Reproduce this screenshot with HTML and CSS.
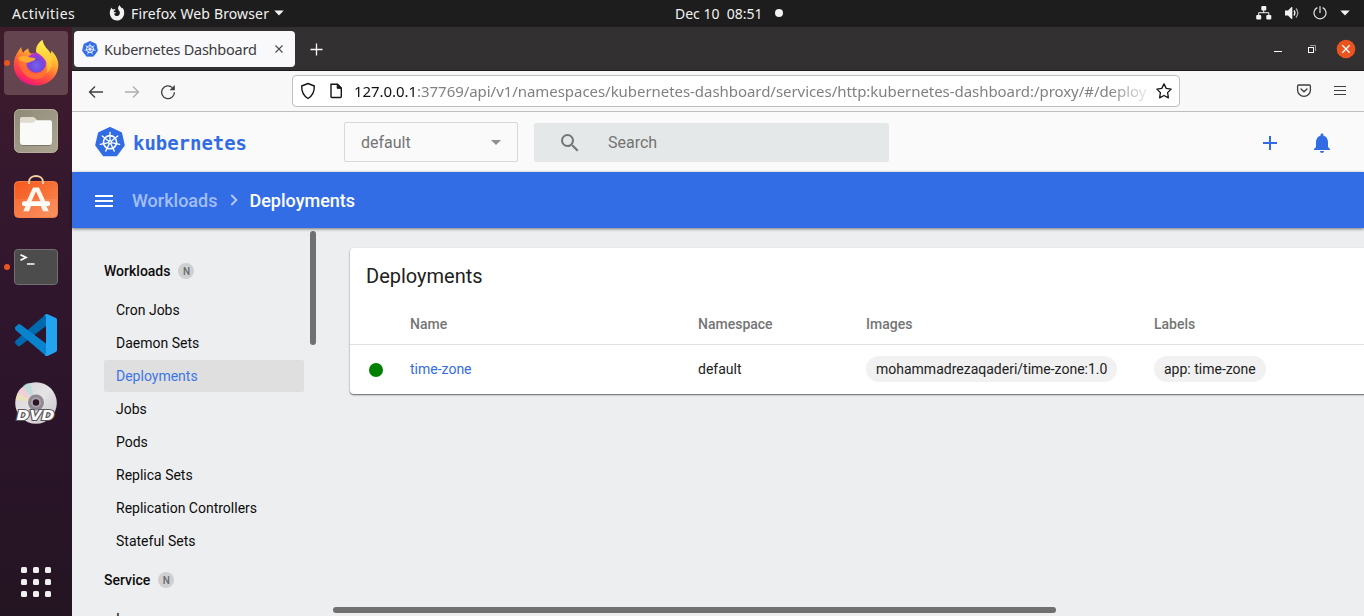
FILE: index.html
```html
<!DOCTYPE html>
<html lang="en">
<head>
<meta charset="utf-8">
<title>Kubernetes Dashboard</title>
<link rel="stylesheet" href="styles.css">
</head>
<body>
<svg width="0" height="0" class="defs">
  <symbol id="k8s" viewBox="0 0 30 30">
    <path d="M15 .8 26.2 6 29 18.2 21.4 28.4H8.6L1 18.2 3.8 6Z" fill="#326ce5" stroke="#326ce5" stroke-width="1.6" stroke-linejoin="round"/>
    <g fill="none" stroke="#fff" stroke-width="1.3" stroke-linecap="round">
      <circle cx="15" cy="15.2" r="6.6" stroke-width="1.6"/>
      <path id="sp" d="M15 13.7V5.3"/>
      <use href="#sp" transform="rotate(51.43 15 15.2)"/>
      <use href="#sp" transform="rotate(102.86 15 15.2)"/>
      <use href="#sp" transform="rotate(154.29 15 15.2)"/>
      <use href="#sp" transform="rotate(205.71 15 15.2)"/>
      <use href="#sp" transform="rotate(257.14 15 15.2)"/>
      <use href="#sp" transform="rotate(308.57 15 15.2)"/>
    </g>
    <circle cx="15" cy="15.2" r="2" fill="#fff"/><circle cx="15" cy="15.2" r=".7" fill="#326ce5"/>
  </symbol>
</svg>
<div class="desktop">
  <header class="topbar">
    <span class="activities ubuntu">Activities</span>
    <div class="appmenu">
      <svg width="16" height="16" viewBox="0 0 16 16"><path d="M.8 8.3C.8 5.8 1.6 4 2.5 2.6 2.8 3.8 3.3 4.4 4.2 4.4 5 4.2 6 4.3 6.6 4.8 5.8 5.3 4.9 5.8 4.7 6.6 4.8 7.5 6 7.4 7 7.3 6.8 8.4 5.4 8.3 5.2 9 5.7 11 7.4 11.4 8.8 10.9 10.6 10.2 11.2 8.4 10.7 6.7 10.3 5.6 9.2 5 9.1 3.5 9 2 9.8.8 10.8.2 11.1 1.8 12.3 2.4 13 3.5L13.5 2.7C14.8 4.3 15.3 6.2 15.2 8.2 15 12.3 12 15.5 8 15.5 4 15.5 1 12.4.8 8.3Z" fill="#f2f2f2"/></svg>
      <span class="app-name ubuntu">Firefox Web Browser</span>
      <svg width="10" height="6" viewBox="0 0 10 6"><path d="M.3.5H9.7L5 5.5Z" fill="#f2f2f2"/></svg>
    </div>
    <div class="clock"><span class="ubuntu date">Dec 10&nbsp; 08:51</span><i></i></div>
    <div class="tray">
      <svg width="16" height="14" viewBox="0 0 16 14"><g fill="#f2f2f2"><rect x="5.3" y="0" width="5" height="4.4" rx="1"/><rect x=".2" y="9" width="5" height="4.5" rx="1"/><rect x="10.3" y="9" width="5" height="4.5" rx="1"/></g><path d="M7.7 4V6.7M2.7 9.5V6.7H12.8V9.5" fill="none" stroke="#f2f2f2"/></svg>
      <svg width="15" height="14" viewBox="0 0 15 14"><path d="M0 4.5H3L6.5 1H7.3V13H6.5L3 9.5H0Z" fill="#f2f2f2"/><path d="M9 4.5Q10.8 7 9 9.5" fill="none" stroke="#f2f2f2" stroke-width="1.3"/><path d="M11 2.5Q14.6 7 11 11.5" fill="none" stroke="#aaa" stroke-width="1.3"/></svg>
      <svg width="14" height="14" viewBox="0 0 14 14"><path d="M4.3 1.6A6 6 0 1 0 9.7 1.6M7 .2V7" fill="none" stroke="#e4e4e4" stroke-width="1.2"/></svg>
      <svg width="10" height="6" viewBox="0 0 10 6"><path d="M.3.5H9.7L5 5.5Z" fill="#f2f2f2"/></svg>
    </div>
  </header>
  <nav class="dock">
    <div class="dock-item active running">
      <svg width="48" height="50" viewBox="0 0 48 50">
        <defs>
          <linearGradient id="ff1" x1=".8" y1=".05" x2=".3" y2="1"><stop offset="0" stop-color="#fff44f"/><stop offset=".35" stop-color="#ffb030"/><stop offset=".62" stop-color="#ff6037"/><stop offset=".85" stop-color="#ff2f56"/><stop offset="1" stop-color="#e31587"/></linearGradient>
          <radialGradient id="ff2" cx=".5" cy=".65" r=".6"><stop offset="0" stop-color="#7463ef"/><stop offset=".55" stop-color="#7148dc"/><stop offset="1" stop-color="#b833c9"/></radialGradient>
          <linearGradient id="ff3" x1="0" y1="0" x2="0" y2="1"><stop offset="0" stop-color="#fff34e"/><stop offset="1" stop-color="#ffae2c"/></linearGradient>
        </defs>
        <path d="M1.8 27C1.8 20 4.5 15.5 9.2 9 9.6 12 10 13.4 11.3 14.7 12.4 13 14.2 11.5 16.5 10.6 16.3 13 17 14.5 18.7 15.5L25 15C22.5 10 25.7 5.4 30.3 2 31.2 6.3 33.2 9.5 37 13L38.4 17 39.5 12.7C44 17 46.7 22.5 46.3 28 45.5 39.8 36 47.4 24.3 47.4 11.5 47.4 1.8 39 1.8 27Z" fill="url(#ff1)"/>
        <circle cx="24.3" cy="24.8" r="10" fill="url(#ff2)"/>
        <path d="M24 14C25 8 27 5 30.3 2 31.5 7.2 34 9.8 37 13.2 40.5 17 41 22 40 27 38.4 32.7 35.8 34.5 34 35.2 37 27 35 20.6 24 14Z" fill="url(#ff3)"/>
        <path d="M6 20C8 17 11 17.5 15 20 13 24 13.5 31 18 33.5 23 37 31 36 34.5 30 36.5 37.5 29 42 21 41 11 38.5 7.5 30 6 20Z" fill="#ff7b32" opacity=".7"/>
        <path d="M6 20C10 17.2 13 18 16.5 19 19 19.7 21.5 19.6 23.6 20.4 22 23.4 19 22.8 16.2 24.8 13 24.5 8 23.5 6 20Z" fill="#ffac2d"/>
      </svg>
    </div>
    <div class="dock-item">
      <svg width="46" height="46" viewBox="0 0 46 46"><defs><linearGradient id="fg" x2="1" y2="1"><stop stop-color="#8f8a78"/><stop offset="1" stop-color="#aba692"/></linearGradient></defs><rect x="1.5" y="1.5" width="43" height="43" rx="5" fill="url(#fg)" stroke="#b5b09d"/><path d="M7 15V11Q7 9 9 9H20Q21 9 22 10L24 12V16Z" fill="#dfdccf"/><path d="M7 14.8H20L23 12.2H37Q39 12.2 39 14.5V33.5Q39 37 36 37H10Q7 37 7 34Z" fill="#fafaf9"/><path d="M9 37.5H37" stroke="#7b7665"/></svg>
    </div>
    <div class="dock-item">
      <svg class="store" width="46" height="46" viewBox="0 0 46 46"><defs><linearGradient id="sg" x2="1" y2="1"><stop stop-color="#f4581d"/><stop offset="1" stop-color="#f98b55"/></linearGradient></defs><rect x="1.5" y="8.5" width="43" height="36" rx="4" fill="url(#sg)" stroke="#f77b45"/><path d="M2 26H44V41Q44 44 41 44H5Q2 44 2 41Z" fill="#fff" opacity=".08"/><path d="M16 11V9C16 1 30 1 30 9V11" fill="none" stroke="#f5d2a0" stroke-width="2"/><path d="M20 14.5H26L32.5 28.5H27.6L23 18.5 18.4 28.5H13.5Z" fill="#fff5ef"/><rect x="9" y="28.3" width="28" height="4.6" rx="2" fill="#fff"/><path d="M12.5 33H18L16 38.2H10.3ZM28 33H33.5L35.7 38.2H30Z" fill="#fff5ef"/></svg>
    </div>
    <div class="dock-item running">
      <svg width="46" height="46" viewBox="0 0 46 46"><rect x="1.5" y="5.5" width="43" height="35" rx="3.5" fill="#4c4c4c" stroke="#707070"/><path d="M7.5 10.7 13 13.5 7.5 16.3" fill="none" stroke="#fff" stroke-width="1.8"/><path d="M14 20H21.5" stroke="#fff" stroke-width="1.5"/></svg>
    </div>
    <div class="dock-item">
      <svg width="46" height="46" viewBox="0 0 46 46"><path d="M2 31Q1.5 29.8 3 28.3L33 2V14L7 34Q5.5 34.8 4.5 33.7Z" fill="#0069ad"/><path d="M2 15.3 5 12.4Q6.2 11.6 7.4 12.4L33 31.5V43.5Q31.5 43 30.2 41.6L2.8 18.2Q1.5 16.8 2 15.3Z" fill="#0a83cf"/><path d="M33 2.2Q33.7 1.8 34.7 2.2L43 6Q44 6.6 44 8V38Q44 39.4 42.8 40L34.5 44Q33 44.4 31.2 42.7 33 43 33 41V5Q33 3 31 3.7Z" fill="#23a4f1"/></svg>
    </div>
    <div class="dock-item">
      <svg width="46" height="46" viewBox="0 0 46 46"><defs><linearGradient id="dg" x2="1" y2="1"><stop stop-color="#d5d3d5"/><stop offset=".5" stop-color="#e5e3e5"/><stop offset="1" stop-color="#c2c0c2"/></linearGradient></defs><circle cx="23" cy="23" r="20.8" fill="url(#dg)"/><path d="M23 23 4 14Q6 9 10 6.5Z" fill="#f3ccd9" opacity=".7"/><path d="M23 23 3 20Q3 16 5 13Z" fill="#f0e6ae" opacity=".7"/><path d="M23 23 10 6Q13 3 17 3Z" fill="#b5dfd8" opacity=".8"/><circle cx="23" cy="22.5" r="8" fill="#8f8893"/><circle cx="23" cy="22.5" r="5" fill="#aaa4ac"/><circle cx="23" cy="22.5" r="3.2" fill="#2c1527"/><text x="3.5" y="40.3" textLength="38" lengthAdjust="spacingAndGlyphs" class="dvd">DVD</text></svg>
    </div>
    <div class="apps"><i></i><i></i><i></i><i></i><i></i><i></i><i></i><i></i><i></i></div>
  </nav>
  <main class="window">
    <div class="tabs">
      <div class="tab">
        <svg width="16" height="16"><use href="#k8s"/></svg>
        <span class="ubuntu tab-title">Kubernetes Dashboard</span>
        <svg width="8" height="8" viewBox="0 0 8 8"><path d="M.5.5 7.5 7.5M7.5.5.5 7.5" stroke="#4b4b4b" stroke-width="1.1"/></svg>
      </div>
      <svg class="newtab" width="13" height="13" viewBox="0 0 13 13"><path d="M6.5.5V12.5M.5 6.5H12.5" stroke="#fbfbfb" stroke-width="1.3"/></svg>
      <div class="controls">
        <svg width="8" height="11" viewBox="0 0 8 11"><path d="M0 7.5H8" stroke="#fff"/></svg>
        <svg width="8" height="9" viewBox="0 0 8 9"><path d="M2 .5H7.5V6" fill="none" stroke="#999"/><rect x=".5" y="2.5" width="5" height="5" fill="none" stroke="#fff"/></svg>
        <svg width="20" height="20" viewBox="0 0 20 20"><circle cx="10" cy="10" r="9.3" fill="#e95420"/><path d="M6.3 6.3 13.7 13.7M13.7 6.3 6.3 13.7" stroke="#fff" stroke-width="1.3"/></svg>
      </div>
    </div>
    <div class="toolbar">
      <div class="navs">
        <svg width="16" height="16" viewBox="0 0 16 16"><path d="M15 8H1.5M7 2.5 1.5 8 7 13.5" fill="none" stroke="#3f3f43" stroke-width="1.3"/></svg>
        <svg width="16" height="16" viewBox="0 0 16 16"><path d="M1 8H14.5M9 2.5 14.5 8 9 13.5" fill="none" stroke="#adadaf" stroke-width="1.3"/></svg>
        <svg width="16" height="16" viewBox="0 0 16 16"><path d="M14.4 8.2A6.4 6.4 0 1 1 12.4 3.6" fill="none" stroke="#3f3f43" stroke-width="1.3"/><path d="M14.8 1V6.2H9.5Z" fill="#3f3f43"/></svg>
      </div>
      <div class="urlbar">
        <svg width="16" height="18" viewBox="0 0 16 18"><path d="M8 1.5 14.3 4C14.5 10 12.5 13.8 8 16.5 3.5 13.8 1.5 10 1.7 4Z" fill="none" stroke="#161618" stroke-width="1.4" stroke-linejoin="round"/></svg>
        <svg width="14" height="16" viewBox="0 0 14 16"><path d="M2 1.2H8.5L12.3 5V13.5Q12.3 14.5 11.3 14.5H3Q2 14.5 2 13.5Z" fill="none" stroke="#161618" stroke-width="1.4"/><path d="M8.2 1V5.3H12.5Z" fill="#161618" stroke="#161618"/></svg>
        <span class="ubuntu url"><b>127.0.0.1</b>:37769/api/v1/namespaces/kubernetes-dashboard/services/http:kubernetes-dashboard:/proxy/#/deploy</span>
        <svg width="16" height="16" viewBox="0 0 16 16"><path d="M8 .9 10.2 5.4 15.1 6.1 11.6 9.6 12.4 14.8 8 12.5 3.6 14.8 4.4 9.6.9 6.1 5.8 5.4Z" fill="none" stroke="#161618" stroke-width="1.3" stroke-linejoin="round"/></svg>
      </div>
      <div class="tools">
        <svg width="16" height="14" viewBox="0 0 16 14"><path d="M2.6 1H13.4Q14.4 1 14.4 2V6A6.4 6.4 0 0 1 1.6 6V2Q1.6 1 2.6 1Z" fill="none" stroke="#3f3f43" stroke-width="1.3"/><path d="M5 5 8 7.8 11 5" fill="none" stroke="#3f3f43" stroke-width="1.4" stroke-linecap="round"/></svg>
        <svg width="12" height="12" viewBox="0 0 12 12"><path d="M0 1.5H12M0 5.5H12M0 9.5H12" stroke="#3f3f43" stroke-width="1.1"/></svg>
      </div>
    </div>
    <div class="k-header">
      <svg class="logo" width="30" height="30"><use href="#k8s"/></svg>
      <svg class="wordmark" width="120" height="32" viewBox="0 0 120 32"><text x="1" y="24" textLength="114" lengthAdjust="spacingAndGlyphs">kubernetes</text></svg>
      <div class="namespace"><span>default</span><svg width="10" height="5"><path d="M0 0H10L5 5Z" fill="#8f8f8f"/></svg></div>
      <div class="search"><svg width="24" height="24" viewBox="0 0 24 24"><path fill="#707575" d="M15.5 14h-.79l-.28-.27A6.47 6.47 0 0 0 16 9.5 6.5 6.5 0 1 0 9.5 16c1.61 0 3.09-.59 4.23-1.57l.27.28v.79l5 4.99L20.49 19l-4.99-5zm-6 0C7.01 14 5 11.99 5 9.5S7.01 5 9.5 5 14 7.01 14 9.5 11.99 14 9.5 14z"/></svg><span>Search</span></div>
      <div class="k-actions">
        <svg width="24" height="24" viewBox="0 0 24 24"><path fill="#326ce5" d="M19 13h-6v6h-2v-6H5v-2h6V5h2v6h6v2z"/></svg>
        <svg width="24" height="24" viewBox="0 0 24 24"><path fill="#326ce5" d="M12 22c1.1 0 2-.9 2-2h-4a2 2 0 0 0 2 2zm6-6v-5c0-3.07-1.64-5.64-4.5-6.32V4c0-.83-.67-1.5-1.5-1.5s-1.5.67-1.5 1.5v.68C7.63 5.36 6 7.92 6 11v5l-2 2v1h16v-1l-2-2z"/></svg>
      </div>
    </div>
    <div class="crumbs">
      <svg class="burger" width="18" height="12"><path d="M0 1H18M0 6H18M0 11H18" stroke="#fff" stroke-width="2"/></svg>
      <span class="parent">Workloads</span>
      <svg class="chev" width="9" height="12" viewBox="0 0 9 12"><path d="M1.3 1 6.4 6 1.3 11" fill="none" stroke="#b4c9f6" stroke-width="1.9"/></svg>
      <span>Deployments</span>
    </div>
    <div class="body">
      <aside class="side">
        <div class="menu">
          <div class="group">Workloads<em>N</em></div>
          <a>Cron Jobs</a><a>Daemon Sets</a><a class="on">Deployments</a><a>Jobs</a><a>Pods</a><a>Replica Sets</a><a>Replication Controllers</a><a>Stateful Sets</a>
          <div class="group second">Service<em>N</em></div>
          <a>Ingresses</a>
        </div>
        <div class="vbar"></div>
      </aside>
      <section class="content">
        <div class="card">
          <h1>Deployments</h1>
          <div class="row head"><span></span><span>Name</span><span>Namespace</span><span>Images</span><span>Labels</span></div>
          <div class="row"><span class="status"></span><span class="link">time-zone</span><span>default</span><span><q>mohammadrezaqaderi/time-zone:1.0</q></span><span><q>app: time-zone</q></span></div>
        </div>
        <div class="hbar"></div>
      </section>
    </div>
  </main>
</div>
</body>
</html>
```
FILE: styles.css
```css
* { box-sizing: border-box; }
body { margin: 0; font-family: Roboto, sans-serif; font-size: 14px; color: #212121; }
svg { display: block; flex: none; }
.defs { position: absolute; }
.ubuntu { font-family: "Noto Sans", "Open Sans", sans-serif; white-space: nowrap; }
.desktop { width: 1364px; height: 616px; overflow: hidden; display: grid; grid-template: 27px 589px / 72px 1292px; }

/* system bar */
.topbar { grid-column: 1 / 3; background: #1d1d1d; color: #f2f2f2; display: grid; grid-template-columns: 109px 566px 588px 101px; align-items: center; font-size: 14px; padding-bottom: 1px; }
.activities { padding-left: 12px; letter-spacing: .5px; }
.appmenu { display: flex; align-items: center; }
.app-name { width: 138px; margin: 0 5px 0 6px; letter-spacing: .14px; }
.clock { display: flex; align-items: center; }
.date { width: 87px; }
.clock i { width: 8px; height: 8px; border-radius: 50%; background: #f2f2f2; margin-left: 13px; }
.tray { display: flex; align-items: center; justify-content: flex-end; gap: 13px; width: 87px; }

/* dock */
.dock { background: linear-gradient(#3f1b2b, #34182e 30%, #2b142a 65%, #241522); display: flex; flex-direction: column; padding: 4px 4px 0; gap: 4px; }
.dock-item { width: 64px; height: 64px; display: flex; align-items: center; justify-content: center; border-radius: 4px; position: relative; }
.dock-item.active { background: #64444f; }
.dock-item.running::before { content: ""; position: absolute; left: 0; top: 29px; width: 6px; height: 6px; border-radius: 50%; background: #e95420; }
.store { margin-bottom: 7px; }
.dvd { font: italic 900 14px "DejaVu Sans", sans-serif; fill: #fff; stroke: #58545a; stroke-width: 2.2px; paint-order: stroke; }
.apps { margin: auto 0 19px 17px; display: grid; grid-template-columns: repeat(3, 6px); gap: 6px; }
.apps i { height: 6px; border-radius: 1.5px; background: #f0eeef; }

/* browser chrome */
.window { display: grid; grid-template-rows: 44px 41px 60px 56px 388px; min-width: 0; background: #eceef0; }
.tabs { background: #323031; border-bottom: 1px solid #1c1b1d; display: flex; align-items: center; padding-left: 2px; }
.tab { width: 221px; height: 36px; border-radius: 4px; background: #f9f9fb; display: flex; align-items: center; padding: 0 12px 0 8px; margin-top: 1px; }
.tab-title { flex: 1; margin-left: 6px; font-size: 14.5px; letter-spacing: -.24px; color: #3c3b3f; }
.newtab { margin: 2px 0 0 15px; }
.controls { display: flex; align-items: center; margin: 1px 8px 0 auto; }
.controls svg:nth-child(2) { margin: 0 20px 0 26px; }
.toolbar { background: #f8f8f8; border-bottom: 1px solid #bfbfbf; display: flex; align-items: center; padding-left: 16px; }
.navs { display: flex; gap: 20px; width: 204px; padding-top: 1px; }
.urlbar { width: 888px; height: 32px; background: #fff; border: 1px solid #bfbfc1; border-radius: 4px; display: flex; align-items: center; padding: 0 7px; }
.url { width: 793px; margin: 0 9px 0 11px; font-size: 15px; letter-spacing: -.05px; color: #818183; -webkit-mask-image: linear-gradient(90deg, #000 755px, transparent 800px); mask-image: linear-gradient(90deg, #000 755px, transparent 800px); }
.url b { font-weight: 400; color: #111; }
.urlbar svg:nth-child(2) { margin-left: 13px; }
.tools { display: flex; align-items: center; gap: 22px; margin-left: auto; padding-right: 18px; }

/* dashboard header */
.k-header { background: #fafafa; display: flex; align-items: center; padding-left: 23px; font-size: 16px; color: #747474; }
.wordmark { margin-left: 7px; }
.wordmark text { font: 700 19.5px "DejaVu Sans Mono", monospace; fill: #326ce5; }
.namespace { width: 174px; height: 40px; margin-left: 92px; border: 1px solid #d9d9d9; border-radius: 2px; display: flex; align-items: center; justify-content: space-between; padding: 0 16px; }
.search { width: 355px; height: 39px; margin: 1px 0 0 16px; border-radius: 2px; background: #e4e8e8; display: flex; align-items: center; padding-left: 24px; gap: 26px; }
.k-actions { display: flex; gap: 28px; margin: 2px 30px 0 auto; }
.crumbs { background: #326de6; color: #fff; display: flex; align-items: center; padding-left: 23px; font-size: 18px; font-weight: 500; box-shadow: 0 1px 3px rgba(0,0,0,.5); z-index: 1; }
.burger { margin-top: 2px; }
.parent { margin-left: 19px; color: #a3bef5; }
.chev { margin: 0 10px 0 13px; }

/* sidebar and content */
.body { display: grid; grid-template-columns: 248px 1044px; min-height: 0; overflow: hidden; }
.side { display: flex; min-height: 0; overflow: hidden; color: #0c0c0c; }
.menu { width: 200px; margin-left: 32px; padding-top: 27px; flex: none; }
.menu a { display: flex; align-items: center; height: 32px; margin-bottom: 1px; padding-left: 12px; border-radius: 2px; }
.menu a.on { background: #dfdfdf; color: #3c76ea; }
.group { height: 32px; margin-bottom: 7px; display: flex; align-items: center; font-weight: 500; }
.group.second { margin-top: 7px; }
.group em { width: 16px; height: 16px; margin-left: 8px; border-radius: 50%; background: #cfd0d1; color: #6a6a6a; font: 500 10px/17px Roboto, sans-serif; text-align: center; }
.vbar { width: 6px; height: 114px; margin: 3px 0 0 6px; border-radius: 3px; background: #707070; }
.content { padding: 20px 0 0 30px; display: flex; flex-direction: column; overflow: hidden; }
.card { width: 1100px; height: 146px; flex: none; background: #fff; border-radius: 4px; box-shadow: 0 1px 2px rgba(0,0,0,.45), 0 1px 1px rgba(0,0,0,.2); }
.card h1 { margin: 0; height: 56px; padding-left: 16px; font-size: 20px; line-height: 56px; font-weight: 400; }
.row { display: grid; grid-template-columns: 44px 288px 168px 288px 200px; align-items: center; height: 48px; padding-left: 16px; }
.row.head { height: 41px; border-bottom: 1px solid #e0e0e0; font-weight: 500; color: #757575; }
.status { width: 14px; height: 14px; margin: 2px 0 0 3px; border-radius: 50%; background: #008000; }
.link { color: #326de6; }
q { quotes: none; display: inline-block; height: 26px; line-height: 26px; padding: 0 10px; border-radius: 13px; background: #f1f1f1; }
.hbar { width: 723px; height: 6px; margin: auto 0 3px -17px; border-radius: 3px; background: #707070; }
```
